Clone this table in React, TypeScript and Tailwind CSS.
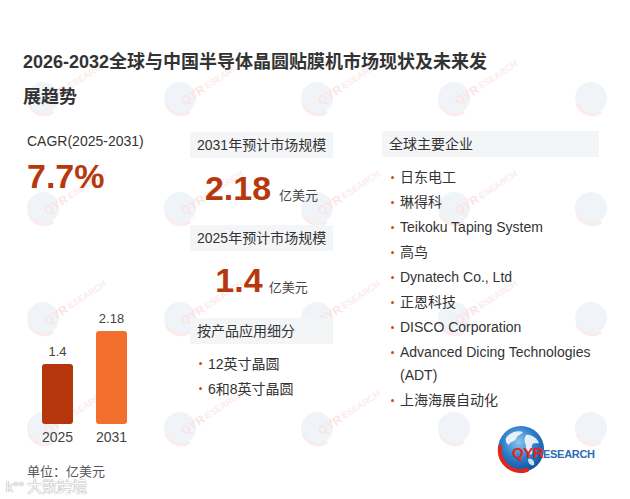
import React from "react";

const bars = [
  { year: "2025", value: 1.4, color: "bg-[#b5360b]" },
  { year: "2031", value: 2.18, color: "bg-[#f26f2e]" },
];

const segments = ["12英寸晶圆", "6和8英寸晶圆"];

const companies = [
  "日东电工",
  "琳得科",
  "Teikoku Taping System",
  "高鸟",
  "Dynatech Co., Ltd",
  "正恩科技",
  "DISCO Corporation",
  "Advanced Dicing Technologies (ADT)",
  "上海海展自动化",
];

// faint QYResearch marks tiled over the page
const marks = [
  { pos: "left-[23px] top-[60px]", text: true },
  { pos: "left-[160px] top-[60px]", text: true },
  { pos: "left-[297px] top-[60px]", text: true },
  { pos: "left-[434px] top-[60px]", text: true },
  { pos: "left-[571px] top-[60px]", text: false },
  { pos: "left-[23px] top-[170px]", text: true },
  { pos: "left-[160px] top-[170px]", text: true },
  { pos: "left-[297px] top-[170px]", text: true },
  { pos: "left-[434px] top-[170px]", text: true },
  { pos: "left-[571px] top-[170px]", text: false },
  { pos: "left-[23px] top-[280px]", text: true },
  { pos: "left-[160px] top-[280px]", text: true },
  { pos: "left-[297px] top-[280px]", text: true },
  { pos: "left-[434px] top-[280px]", text: true },
  { pos: "left-[571px] top-[280px]", text: false },
  { pos: "left-[23px] top-[390px]", text: true },
  { pos: "left-[160px] top-[390px]", text: true },
  { pos: "left-[297px] top-[390px]", text: true },
  { pos: "left-[434px] top-[390px]", text: false },
  { pos: "left-[571px] top-[390px]", text: false },
];

function Watermark({ className, text }: { className: string; text: boolean }) {
  return (
    <svg
      className={`pointer-events-none absolute ${className}`}
      width="100"
      height="60"
      viewBox="0 0 100 60"
    >
      <circle cx="20" cy="38" r="16" fill="#f0f4f9" />
      <path d="M6 44 A16 16 0 0 0 30 52" fill="none" stroke="#fcebeb" strokeWidth="3" />
      {text && (
        <g transform="rotate(-33 22 42)">
          <text x="22" y="46" fontSize="12" fontWeight="700" fill="#fbe4e4" fontFamily="Liberation Sans, sans-serif">
            QYR
          </text>
          <text x="50" y="45" fontSize="9" fontWeight="700" fill="#fcecec" fontFamily="Liberation Sans, sans-serif">
            ESEARCH
          </text>
        </g>
      )}
    </svg>
  );
}

function Logo() {
  return (
    <div className="relative h-[50px] w-[106px]">
      <svg width="50" height="50" viewBox="0 0 50 50">
        <defs>
          <radialGradient id="globe" cx="0.45" cy="0.35" r="0.7">
            <stop offset="0" stopColor="#8cc4ef" />
            <stop offset="0.5" stopColor="#2f7fcc" />
            <stop offset="1" stopColor="#0a4d98" />
          </radialGradient>
        </defs>
        <circle cx="24" cy="24" r="23" fill="url(#globe)" />
        <path
          d="M9 13 C13 7 21 5 26 7 C24 10 20 10 19 14 C17 17 13 16 12 20 C10 19 8 17 9 13 Z"
          fill="#ffffff"
          opacity="0.85"
        />
        <path
          d="M29 10 C34 9 40 13 42 18 C39 19 37 17 35 20 C34 24 37 27 34 30 C31 27 28 24 29 20 C27 17 27 13 29 10 Z"
          fill="#ffffff"
          opacity="0.85"
        />
        <path d="M31 34 C35 33 38 36 37 40 C34 41 31 39 31 34 Z" fill="#ffffff" opacity="0.8" />
        <path
          d="M3 22 A21 21 0 0 0 30 45"
          fill="none"
          stroke="#e3261c"
          strokeWidth="4"
          strokeLinecap="round"
        />
      </svg>
      <div className="absolute left-[15px] top-[20px] flex items-baseline font-['Liberation_Sans',sans-serif] font-bold leading-none">
        <span className="text-[15px] tracking-[-0.5px] text-[#e3261c]">QYR</span>
        <span className="text-[11px] tracking-[-0.3px] text-[#2b6cb3]">ESEARCH</span>
      </div>
    </div>
  );
}

function Bullet({ children }: { children: React.ReactNode }) {
  return (
    <li className="flex items-start pl-[9px]">
      <span className="mt-[10px] mr-[6px] h-[3px] w-[3px] shrink-0 rounded-full bg-[#c4502a]" />
      <span>{children}</span>
    </li>
  );
}

function BoxTitle({ children }: { children: React.ReactNode }) {
  return (
    <div className="h-[26px] bg-[#f4f5f7] pl-[7px] text-[14px] leading-[26px] text-[#333]">
      {children}
    </div>
  );
}

export default function App() {
  return (
    <div className="relative h-[499px] w-[630px] overflow-hidden bg-white font-['Liberation_Sans','Noto_Sans_CJK_SC',sans-serif] text-[#333]">
      {marks.map((m) => (
        <Watermark key={m.pos} className={m.pos} text={m.text} />
      ))}

      <div className="relative">
        <h1 className="ml-[23px] w-[466px] pt-[45px] text-[18px] font-bold leading-[35px] text-[#333]">
          2026-2032全球与中国半导体晶圆贴膜机市场现状及未来发展趋势
        </h1>

        <div className="mt-[16px] flex">
          {/* CAGR + bar chart */}
          <div className="ml-[27px] w-[163px]">
            <div className="text-[14px] leading-5">CAGR(2025-2031)</div>
            <div className="mt-[8px] text-[34px] font-bold leading-none text-[#b8380d]">7.7%</div>
            <div className="mt-[7px] flex h-[224px] items-end gap-[23px] pl-[15px]">
              {bars.map((b) => (
                <div key={b.year} className="flex w-[31px] flex-col items-center">
                  <span className="mb-1 text-[13px] leading-4 text-[#444]">{b.value}</span>
                  <div
                    className={`w-[31px] rounded-[3px] ${b.color}`}
                    style={{ height: `${Math.round(b.value * 42.7)}px` }}
                  />
                </div>
              ))}
            </div>
            <div className="mt-[3px] flex gap-[23px] pl-[15px]">
              {bars.map((b) => (
                <span key={b.year} className="w-[31px] text-center text-[14px] leading-5 text-[#444]">
                  {b.year}
                </span>
              ))}
            </div>
            <div className="mt-[15px] text-[13px] leading-5 text-[#555]">单位：亿美元</div>
          </div>

          {/* market size */}
          <div className="w-[143px] pt-[1px]">
            <BoxTitle>2031年预计市场规模</BoxTitle>
            <div className="mt-[12.5px] flex items-baseline justify-center">
              <span className="text-[34px] font-bold leading-none text-[#b8380d]">2.18</span>
              <span className="ml-[8px] text-[13px] leading-none text-[#444]">亿美元</span>
            </div>
            <div className="mt-[20.5px]">
              <BoxTitle>2025年预计市场规模</BoxTitle>
            </div>
            <div className="mt-[11.5px] flex items-baseline justify-center">
              <span className="text-[34px] font-bold leading-none text-[#b8380d]">1.4</span>
              <span className="ml-[6px] text-[13px] leading-none text-[#444]">亿美元</span>
            </div>
            <div className="mt-[21.5px]">
              <BoxTitle>按产品应用细分</BoxTitle>
            </div>
            <ul className="mt-[7.5px] text-[14px] leading-[25px] text-[#333]">
              {segments.map((s) => (
                <Bullet key={s}>{s}</Bullet>
              ))}
            </ul>
          </div>

          {/* companies */}
          <div className="ml-[49px] w-[217px]">
            <BoxTitle>全球主要企业</BoxTitle>
            <ul className="mt-[8.5px] flex flex-col gap-[2px] text-[14px] leading-[23px] text-[#333]">
              {companies.map((c) => (
                <Bullet key={c}>{c}</Bullet>
              ))}
            </ul>
            <div className="mt-[13px] pl-[115px]">
              <Logo />
            </div>
          </div>
        </div>
      </div>

      <div className="absolute left-[6px] top-[477px] flex items-center gap-[3px] text-[15px] leading-5 text-white [text-shadow:0_0_1px_#999,0_0_1px_#999]">
        <span className="text-[14px]">k°°</span>
        <span>大数跨境</span>
      </div>
    </div>
  );
}
